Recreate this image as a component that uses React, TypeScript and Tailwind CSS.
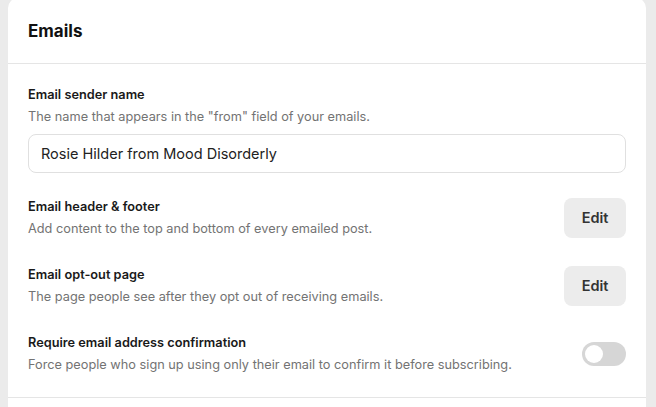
import React from 'react';

function Row({ title, desc, children }: { title: string; desc: string; children?: React.ReactNode }) {
  return (
    <div className="flex items-center justify-between gap-4">
      <div>
        <p className="text-[12.75px] leading-[20px] font-semibold text-[#1a1a1a]">{title}</p>
        <p className="mt-[2px] text-[12.75px] leading-[20px] text-[#737373]">{desc}</p>
      </div>
      {children}
    </div>
  );
}

function EditButton() {
  return (
    <button className="h-[40px] w-[62px] rounded-[8px] bg-[#ececec] text-[14.5px] font-semibold text-[#333]">
      Edit
    </button>
  );
}

export default function App() {
  return (
    <div className="min-h-[407px] overflow-hidden bg-[#ebebeb] pl-[8px] pr-[10px] font-['Inter','Liberation_Sans',sans-serif]">
      <div className="-mt-[2px] rounded-t-[10px] bg-white pb-[12px]">
        {/* Header */}
        <div className="flex h-[66px] items-center border-b border-[#e5e5e5] px-[20px] pt-[2px]">
          <h2 className="text-[17px] font-bold text-[#111]">Emails</h2>
        </div>

        <div className="border-b border-[#e5e5e5] px-[20px] pb-[22px] pt-[21px]">
          <p className="text-[12.75px] leading-[20px] font-semibold text-[#1a1a1a]">Email sender name</p>
          <p className="mt-[2px] text-[12.75px] leading-[20px] text-[#737373]">
            The name that appears in the "from" field of your emails.
          </p>
          <input
            readOnly
            value="Rosie Hilder from Mood Disorderly"
            className="mt-[7px] h-[39px] w-full rounded-[8px] border border-[#e0e0e0] px-[12px] text-[14.5px] text-[#222] outline-none"
          />

          <div className="mt-[24px] flex flex-col gap-[26px]">
            <Row title="Email header & footer" desc="Add content to the top and bottom of every emailed post.">
              <EditButton />
            </Row>
            <Row title="Email opt-out page" desc="The page people see after they opt out of receiving emails.">
              <EditButton />
            </Row>
            <Row
              title="Require email address confirmation"
              desc="Force people who sign up using only their email to confirm it before subscribing."
            >
              <div className="flex h-[24px] w-[44px] items-center rounded-full bg-[#d6d6d6] px-[3px]">
                <div className="h-[18px] w-[18px] rounded-full bg-white" />
              </div>
            </Row>
          </div>
        </div>
      </div>
    </div>
  );
}
